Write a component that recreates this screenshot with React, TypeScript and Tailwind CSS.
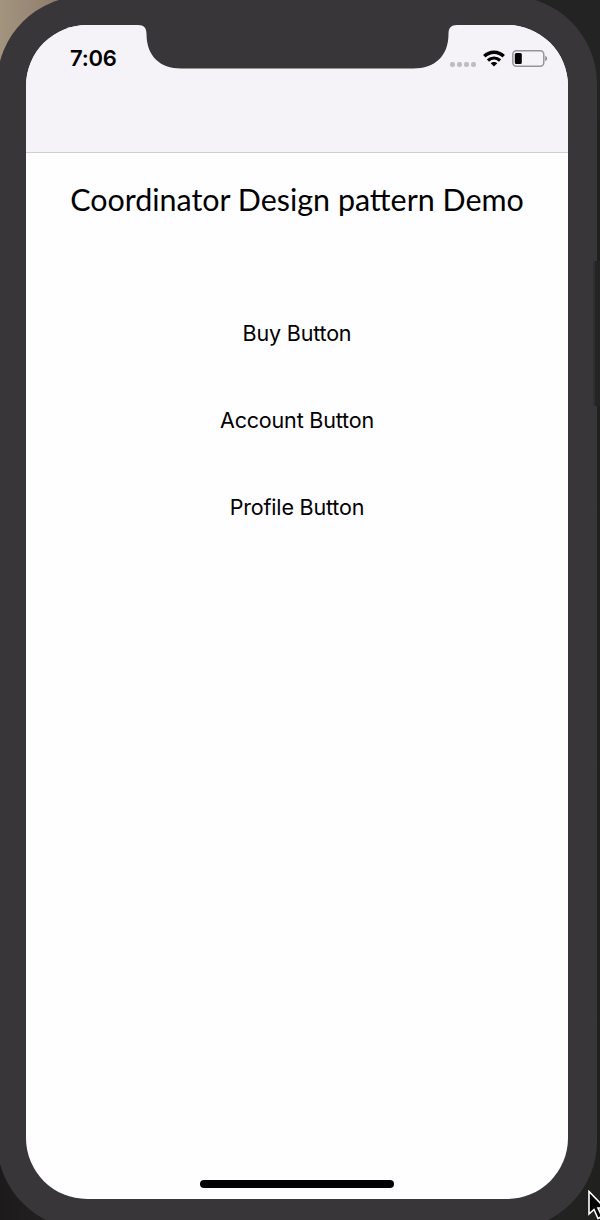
import React from "react";

function Notch() {
  return (
    <svg className="absolute top-0 left-[110px]" width="322" height="44" viewBox="0 0 322 44" fill="#383638">
      <path d="M0 0H2C8 0 10.500 3 10.500 9C10.500 31 24 43.500 45 43.500H277C299 43.500 312.500 31 312.500 9C312.500 3 315 0 321 0V-1H0Z" />
    </svg>
  );
}

function Wifi() {
  return (
    <svg width="22" height="17" viewBox="0 0 22 17" fill="none" stroke="#000" strokeWidth="3.500">
      <path d="M1.300 6.300C6.800 0.900 15.200 0.900 20.700 6.300" />
      <path d="M4.900 10.500C8.500 7.200 13.500 7.200 17.100 10.500" strokeWidth="3.200" />
      <path d="M11 16.500L7.700 13.300C9.500 11.500 12.500 11.500 14.300 13.300Z" fill="#000" stroke="none" />
    </svg>
  );
}

function Battery() {
  return (
    <svg width="36" height="17" viewBox="0 0 36 17">
      <rect x="0.800" y="0.800" width="31" height="15.400" rx="3.600" fill="none" stroke="#969498" strokeWidth="1.500" />
      <rect x="2.800" y="2.900" width="7" height="11.200" rx="1.500" fill="#000" />
      <path d="M33.300 5.800C35.700 6.800 35.700 10.200 33.300 11.200Z" fill="#88868a" />
    </svg>
  );
}

function StatusBar() {
  return (
    <div className="flex h-[67px] items-center pl-[44px] pr-[20px]">
      <time className="-mt-px font-['Inter'] text-[22px] leading-none font-semibold tracking-[-0.2px]">7:06</time>
      <div className="ml-auto flex items-center">
        <div className="mt-[11px] mr-[7px] flex gap-[2px]">
          {[0, 1, 2, 3].map((dot) => (
            <span key={dot} className="size-[5px] rounded-[2px] bg-[#bfbdc1]" />
          ))}
        </div>
        <Wifi />
        <div className="ml-[7px]">
          <Battery />
        </div>
      </div>
    </div>
  );
}

const actions = ["Buy Button", "Account Button", "Profile Button"];

export default function App() {
  return (
    <div className="relative h-[1220px] w-[600px] overflow-hidden bg-[linear-gradient(to_right,#a39480_0px,#8b7a68_65px,#242324_100px)] font-['Inter',sans-serif] text-black">
      <div className="absolute right-0 bottom-0 h-[1100px] w-[600px] bg-[linear-gradient(to_right,#1c1a1b,#242324_60px,#232222_560px,#20211f)]" />
      <div className="relative -mt-1 -ml-[3px] h-[1233px] w-[600px] rounded-[88px] bg-[#383638] pt-[29px] pl-[29px]">
        <main className="relative flex h-[1174px] w-[542px] flex-col overflow-hidden rounded-[61px] bg-[#fefdff]">
          <header className="h-[128px] shrink-0 border-b border-[#d0ced1] bg-[#f5f3f7]">
            <StatusBar />
          </header>
          <Notch />
          <h1 className="mt-[25px] text-center font-['Lato'] text-[30px] leading-[42px] font-normal whitespace-nowrap">
            <span className="text-[30.450px]">Coordinator Design pattern Demo</span>
          </h1>
          <div className="mt-[93px] flex flex-col items-center gap-[47px]">
            {actions.map((label) => (
              <button key={label} className="h-10 text-[21.500px] leading-10 tracking-[-0.180px]">
                {label}
              </button>
            ))}
          </div>
          <div className="mt-auto mb-[11px] h-[8px] w-[194px] shrink-0 self-center rounded-full bg-black" />
        </main>
      </div>
      <div className="absolute top-[261px] left-[593px] h-[145px] w-[10px] rounded-[2px] border-l-2 border-[#302e30] bg-[#252425]" />
      <svg className="absolute top-[1190px] left-[588px]" width="20" height="31" viewBox="0 0 20 31">
        <path d="M1 1.500V24L6 19.500L10 28.500L14 26.500L10 18H17Z" fill="#000" stroke="#fff" strokeWidth="1.600" />
      </svg>
    </div>
  );
}
